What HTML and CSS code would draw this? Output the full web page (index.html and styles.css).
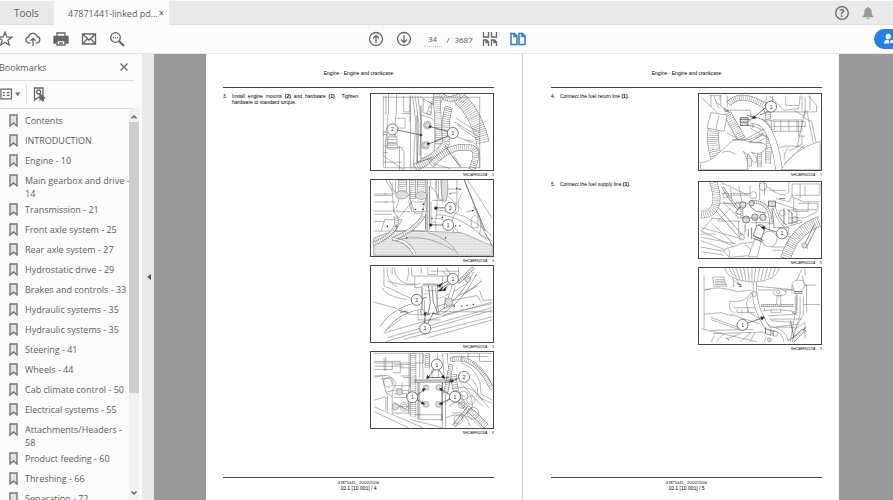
FILE: index.html
```
<!DOCTYPE html>
<html lang="en">
<head>
  <meta charset="UTF-8">
  <title>47871441-linked pdf</title>
  <link rel="stylesheet" href="styles.css">
  <script src="hoses.js" defer></script>
</head>
<body>
  <header class="tabs">
    <a class="tab tools" href="#">Tools</a>
    <div class="tab active"><span>47871441-linked pd...</span><button aria-label="Close tab">×</button></div>
    <div class="status">
      <button aria-label="Help"><svg viewBox="0 0 16 16"><circle cx="8" cy="8" r="6.3"/><text x="8" y="11.5" class="q">?</text></svg></button>
      <button aria-label="Notifications"><svg viewBox="0 0 16 16" class="bell"><path d="M8 2c.8 0 1 .5 1 1 2 .5 2.600 2 2.600 4 0 2.500.8 3.500 1.800 4.500v.8H2.600v-.8c1-1 1.800-2 1.800-4.500 0-2 .6-3.500 2.600-4 0-.5.2-1 1-1zM6.500 13h3c-.3 1.500-2.700 1.500-3 0z"/></svg></button>
    </div>
  </header>

  <nav class="toolbar">
    <div class="group left">
      <button aria-label="Star"><svg viewBox="0 0 16 16"><path d="M8 1.200l1.800 4.600 5 .3-3.900 3.100 1.300 4.800L8 11.300 3.800 14l1.300-4.800L1.200 6.100l5-.3z"/></svg></button>
      <button aria-label="Upload"><svg viewBox="0 0 16 16"><path d="M5.500 11.800H4A2.900 2.900 0 0 1 3.600 6 4.500 4.500 0 0 1 12.300 5.500 3.200 3.200 0 0 1 12 11.800h-1.500M8 15V7.500M5.500 9.800L8 7.300l2.500 2.500"/></svg></button>
      <button aria-label="Print"><svg viewBox="0 0 16 16"><path class="solid" d="M1 5.500h14V12h-2.500V9.500h-9V12H1z"/><path d="M4 5V2h8v3M4 9.500V14h8V9.500M6 12h4"/></svg></button>
      <button aria-label="Mail"><svg viewBox="0 0 16 16"><path d="M1.500 3h13v10h-13zM2 3.500L8 9l6-5.500M2 12.500l4.300-4.800M14 12.500L9.700 7.700"/></svg></button>
      <button aria-label="Search"><svg viewBox="0 0 16 16"><circle cx="6.500" cy="6.500" r="4.800"/><path d="M4 6.500h1M6 6.500h1M8 6.500h1"/><path class="thick" d="M10.200 10.200L15 15"/></svg></button>
    </div>
    <div class="group">
      <button aria-label="Previous page"><svg viewBox="0 0 16 16"><circle cx="8" cy="8" r="6.500"/><path d="M8 12V4.500M5 7.500l3-3 3 3"/></svg></button>
      <button aria-label="Next page"><svg viewBox="0 0 16 16"><circle cx="8" cy="8" r="6.500"/><path d="M8 4v7.500M5 8.500l3 3 3-3"/></svg></button>
      <label class="pager"><input type="text" value="34" aria-label="Page"><span>/</span><span>3687</span></label>
      <button aria-label="Scroll pages"><svg viewBox="0 0 16 16"><path d="M1.500 1v5h5V1M9.500 1v5h5V1M1.500 15V9h3l2 2v4M4 9v2.500h2.500M9.500 15V9h3l2 2v4M12 9v2.500h2.500"/></svg></button>
      <button aria-label="Two pages"><svg viewBox="0 0 16 16" class="blue"><path d="M1 2.500h3.500L7 5v8.500H1zM4 2.500v3h3M9 2.500h3.500L15 5v8.500H9zM12 2.500v3h3"/></svg></button>
    </div>
    <button class="share" aria-label="Share"><svg viewBox="0 0 16 16"><circle cx="6" cy="5" r="3"/><path d="M1 13c0-3 2-4.500 5-4.500L8 13z"/><circle cx="10" cy="11" r="2.500" class="plus"/></svg></button>
  </nav>

  <main class="workspace">
    <aside class="panel">
      <div class="panel-head"><h2>Bookmarks</h2><button aria-label="Close panel"><svg viewBox="0 0 10 10"><path d="M1.500 1.500l7 7M8.500 1.500l-7 7"/></svg></button></div>
      <div class="panel-tools">
        <button aria-label="Options"><svg viewBox="0 0 22 16"><path d="M1 3h11v10H1zM3 6.500h2M3 9.500h2M7 6.500h3M7 9.500h3"/><path class="solid" d="M17 7h3l-1.500 2z"/></svg></button>
        <button aria-label="Find bookmark"><svg viewBox="0 0 16 16"><path d="M3.500 2h8.500v12l-4-3-4.500 3z"/><circle cx="7.700" cy="6" r="2"/><path class="solid" d="M9 8l4.500 4-2 .3 1 2-1 .5-1-2L9 14z"/></svg></button>
      </div>
      <div class="list-wrap">
        <ul class="bookmarks">
          <li><a href="#">Contents</a></li>
          <li><a href="#">INTRODUCTION</a></li>
          <li><a href="#">Engine - 10</a></li>
          <li><a href="#">Main gearbox and drive - 14</a></li>
          <li><a href="#">Transmission - 21</a></li>
          <li><a href="#">Front axle system - 25</a></li>
          <li><a href="#">Rear axle system - 27</a></li>
          <li><a href="#">Hydrostatic drive - 29</a></li>
          <li><a href="#">Brakes and controls - 33</a></li>
          <li><a href="#">Hydraulic systems - 35</a></li>
          <li><a href="#">Hydraulic systems - 35</a></li>
          <li><a href="#">Steering - 41</a></li>
          <li><a href="#">Wheels - 44</a></li>
          <li><a href="#">Cab climate control - 50</a></li>
          <li><a href="#">Electrical systems - 55</a></li>
          <li><a href="#">Attachments/Headers - 58</a></li>
          <li><a href="#">Product feeding - 60</a></li>
          <li><a href="#">Threshing - 66</a></li>
          <li><a href="#">Separation - 72</a></li>
        </ul>
        <div class="scrollbar">
          <svg viewBox="0 0 10 10"><path d="M2.500 6.500L5 4l2.500 2.500"/></svg>
          <div class="track"><div class="thumb"></div></div>
          <svg viewBox="0 0 10 10"><path d="M2.500 3.500L5 6l2.500-2.500"/></svg>
        </div>
      </div>
    </aside>
    <button class="collapse" aria-label="Collapse panel"><svg viewBox="0 0 4 8"><path d="M4 1v6L0 4z"/></svg></button>

    <div class="viewer">
      <article class="page left-page">
        <h3>Engine - Engine and crankcase</h3>
        <section class="step">
          <span class="num">3.</span>
          <p>Install engine mounts <b>(2)</b> and hardware <b>(1)</b>.&nbsp; Tighten hardware to standard torque.</p>
          <div class="figures">
            <figure>
              <svg viewBox="32 25 372 234">
                <path d="M68 30V250M68 215L130 258M68 235H125M76 30V90M68 140H85M68 150H82M75 160V250M130 30V80H150V30M125 85H150M110 100H135V130H112M150 60V110M68 182L80 190H125L132 205V258M118 185V258M68 205H82"/>
                <path d="M152 30V256M158 30L168 110 160 256M166 30L178 120 172 256M174 30L185 110 180 215M182 30L196 50M68 150C75 130 80 150 80 185"/>
                <path class="heavy" d="M172 90V235M184 60V225"/>
                <path d="M184 90L215 98 228 110 225 210 180 225M192 40L218 55 215 90 190 82ZM225 30L205 75M230 30L212 70M255 30L240 65M208 50L230 60M305 30L290 60M312 30L330 90"/>
                <path class="hose" data-w="26" data-plain d="M96 20V60Q98 80 92 105V160"/>
                <rect x="82" y="155" width="28" height="22" rx="4"/><rect x="79" y="175" width="34" height="20" rx="8"/><path d="M82 165H110M80 182H112"/>
                <path class="hose" data-w="40" d="M285 25Q350 70 375 175"/>
                <path class="hose" data-w="22" d="M232 20Q235 80 240 180"/>
                <path class="hose" data-w="24" d="M270 65Q255 110 262 175Q245 210 165 252"/>
                <path class="hose" data-w="20" d="M340 258Q370 190 330 190Q270 180 215 245"/>
                <path class="hose" data-w="16" d="M250 30Q270 50 305 30"/>
                <path d="M285 110L365 158M292 100L365 145M295 120L365 170M280 150L340 175M320 165Q365 170 365 215V252M225 240L275 255M285 215L310 252M68 252H365V35H68"/>
                <path class="heavy" d="M258 185L305 250M170 238L220 220"/>
                <circle cx="204" cy="121" r="12"/><circle cx="204" cy="121" r="8" class="shade"/><circle cx="198" cy="183" r="12"/><circle cx="198" cy="183" r="8" class="shade"/><circle cx="208" cy="83" r="6"/><circle cx="212" cy="229" r="5" class="shade"/>
                <g class="lead"><path d="M112 136L186 152M266 140L210 125M268 154L205 180"/><circle cx="96" cy="134" r="17"/><circle cx="282" cy="145" r="17"/><circle cx="184" cy="151" r="3" class="dot"/><circle cx="212" cy="126" r="3" class="dot"/><circle cx="207" cy="178" r="3" class="dot"/></g>
                <text x="96" y="140">2</text><text x="282" y="151">1</text>
              </svg>
              <figcaption><span>NH12AFRS0128A</span><span>3</span></figcaption>
            </figure>
            <figure>
              <svg viewBox="32 282 372 235">
                <defs><pattern id="mesh" width="8" height="8" patternUnits="userSpaceOnUse"><path d="M0 4L4 0 8 4 4 8Z"/></pattern></defs>
                <path class="mesh" d="M38 462Q100 430 185 440L310 445 404 485V515H38Z"/>
                <path d="M38 325H100M38 330H95M38 350H105M38 378H112M38 388H95M38 410H72M95 290V315M75 282L95 315 100 380M85 282L105 325M200 440H38M60 440L72 405H125L105 440M72 350H80M70 325H78"/>
                <path d="M115 325Q120 355 98 378L115 400 160 345M105 285V320L150 330 155 380H200V325M110 380H150"/>
                <path class="hose" data-w="12" d="M36 480Q125 440 105 393"/>
                <path class="hose" data-w="12" d="M95 466Q170 435 193 390"/>
                <path class="hose" data-w="10" data-plain d="M100 465Q145 470 165 514"/>
                <path class="hose" data-w="26" d="M127 282V322"/><path class="hose" data-w="20" d="M158 282V340"/><path class="hose" data-w="26" d="M185 282V324"/>
                <ellipse cx="125" cy="328" rx="20" ry="12" class="shade"/><ellipse cx="185" cy="330" rx="18" ry="12" class="shade"/><path d="M150 310V340L165 385H188L198 340M160 350H195M145 345L152 372"/>
                <path class="heavy" d="M203 282V440M210 300V436M198 385V436"/>
                <path d="M214 282V300L234 325V355L230 410M215 350V412M230 282V310M238 282V340M245 282L250 350M220 345H265M215 412H230V438"/>
                <ellipse cx="247" cy="305" rx="17" ry="40"/><ellipse cx="257" cy="305" rx="10" ry="45" class="shade"/>
                <path d="M265 310H310M275 322H295M267 330L310 375M318 282L380 445M328 282L404 400M295 282V355L275 360M312 320Q295 345 300 375Q270 400 285 445M345 365Q380 395 365 450L404 470M233 375Q320 375 404 455M230 390Q300 385 390 470M225 400Q270 400 300 445M325 380L350 375M338 405Q350 380 360 400V430H342Z"/>
                <path class="heavy" d="M318 282L383 440M382 445L404 485"/>
                <path d="M105 470Q190 440 285 500M205 445Q270 460 300 514"/>
                <g class="marks"><path d="M189 357h5M188 373h5M292 308h4M272 324h4M302 310h4M289 424h4M302 424h4M342 377h4M216 401h4M248 398h4M78 425h4M105 425h4M138 460h4M258 461h4M165 373h4"/></g>
                <g class="lead"><path d="M258 368H230M252 421H216"/><circle cx="275" cy="368" r="17"/><circle cx="268" cy="421" r="17"/><circle cx="230" cy="369" r="4" class="dot"/><circle cx="214" cy="421" r="4" class="dot"/></g>
                <text x="275" y="374">2</text><text x="268" y="427">1</text>
              </svg>
              <figcaption><span>NH12AFRS0130A</span><span>4</span></figcaption>
            </figure>
            <figure>
              <svg viewBox="32 14 372 234">
                <path d="M38 125L110 145M70 18V75M80 18Q75 60 110 78M70 75L150 112M95 18V40M100 18Q110 75 165 70M145 18Q150 40 140 60M155 18V45H300V18M165 45V80H250V45M185 18V35M205 18V40H235V18M215 30H300M70 205L120 160 185 165M72 215L125 175M75 200L190 120"/>
                <path d="M65 80Q70 105 140 118M80 60Q130 80 185 68M250 30L275 50M260 18L290 65"/>
                <path class="hose" data-w="24" data-plain d="M68 205Q110 145 190 135Q270 130 365 50"/>
                <path class="hose" data-w="10" d="M300 65Q320 45 345 18"/>
                <path class="hose" data-w="12" data-plain d="M240 160Q310 120 350 35"/>
                <path class="hose" data-w="12" data-plain d="M268 130L285 75"/>
                <path d="M75 247L404 150M80 235L404 142M70 220L404 125M130 240L404 170M205 235L404 180M250 166Q300 150 404 130M240 155H404M300 105L360 75M365 90L375 120L404 118M280 120L355 105 370 125M260 110L285 135 255 145Z"/>
                <path class="white" d="M185 75H235L232 160H205L190 152Z"/>
                <path class="heavy" d="M207 75L213 125 205 165M218 78L222 125 236 160M190 70H236M183 150L185 164H212M218 160L240 163M115 150L145 158M120 157L142 153"/>
                <path d="M190 80L185 150M195 120V165M228 80L240 165M197 90H229M195 100H204M175 150V180H245"/>
                <circle cx="270" cy="125" r="12" class="shade"/><circle cx="328" cy="55" r="9" class="shade"/><path class="marks" d="M285 138h4M308 137h4M324 135h4M343 132h4"/>
                <g class="lead"><path d="M188 115L201 110M268 68L246 84M272 69L256 86M268 60L238 75M195 190L197 160M205 190L224 155"/><circle cx="171" cy="118" r="17"/><circle cx="282" cy="54" r="17"/><circle cx="197" cy="206" r="17"/><path class="arrow" d="M234 75l14-7-4 10zM236 91l14-11-3 11zM249 90l12-11-2 11zM193 158h8l-4 9z"/></g>
                <text x="171" y="124">2</text><text x="282" y="60">1</text><text x="197" y="212">1</text>
              </svg>
              <figcaption><span>NH12AFRS0132A</span><span>5</span></figcaption>
            </figure>
            <figure>
              <svg viewBox="32 271 372 235">
                <path d="M38 275H190V305H38M38 300H95V325H38M40 315H130M38 345H65L75 395 95 410M95 300H120V335H98M100 310H150M70 330V290M75 285V330M120 320H150V345H120M38 350Q90 330 105 365Q105 395 75 395M60 355Q95 345 95 370M38 440L190 505M38 455L145 505M38 420L75 410V450M95 390H145V460H95ZM80 400V455M100 400H140V412H100M98 425L140 450M105 440H145M95 375H160M128 350H150V380M105 385H125V365"/>
                <circle cx="83" cy="365" r="15"/><circle cx="105" cy="440" r="10" class="shade"/><circle cx="133" cy="440" r="14"/><circle cx="133" cy="440" r="8"/><circle cx="118" cy="395" r="9" class="shade"/>
                <path class="hose" data-w="18" d="M160 275V470"/>
                <path d="M147 275V465M180 275V350M190 275V355M210 275V325M235 275V300M180 365V480H250V365M150 480L250 505M165 465H250V505M260 365V505M218 325V350H238V325Z"/>
                <path class="hose" data-w="14" d="M203 275V320"/>
                <path class="hose" data-w="16" data-plain d="M263 350L258 275"/><path class="hose" data-w="14" d="M277 310L260 400"/>
                <path class="heavy" d="M163 358H275M163 364H275M200 350H270M175 365V480M250 365L248 485M275 355L285 385"/>
                <path class="hose" data-w="14" d="M275 295Q340 280 385 350L404 385"/>
                <path class="hose" data-w="18" d="M285 340Q285 420 345 460L385 500"/>
                <path class="hose" data-w="12" d="M335 440L285 500"/>
                <path d="M270 275H404M280 285H390M310 280V300M330 275V295M310 305Q370 325 370 400L404 420M340 300Q400 350 404 375M300 360L375 440M310 345L395 445M365 275V300H404M280 385Q340 365 375 420M260 430Q285 385 320 410M270 440Q295 410 325 445M280 460Q325 450 335 500M260 475Q320 445 370 505M325 395Q350 410 340 450M360 410L404 430M340 355Q370 385 355 410"/>
                <circle cx="315" cy="405" r="13"/><circle cx="338" cy="420" r="13"/><circle cx="345" cy="460" r="18"/><circle cx="310" cy="435" r="10"/><circle cx="300" cy="480" r="14"/>
                <circle cx="200" cy="381" r="8" class="shade"/><circle cx="239" cy="381" r="9" class="shade"/><circle cx="200" cy="433" r="9" class="shade"/><circle cx="238" cy="433" r="9" class="shade"/>
                <g class="lead"><path d="M226 325L205 350M239 325L255 350M300 353L275 362M172 405L196 385M172 418L192 431M274 403L242 384M275 416L241 431"/><circle cx="233" cy="310" r="17"/><circle cx="317" cy="348" r="17"/><circle cx="157" cy="411" r="17"/><circle cx="289" cy="409" r="17"/><path class="arrow" d="M202 354l2-11 7 6zM257 354l-10-6 7-5zM272 363l10-7 2 7zM197 384l-10 2 5 7zM195 433l-10-2 4-7zM241 384l10 1-4 7zM240 432l9-6 2 7z"/></g>
                <text x="233" y="316">1</text><text x="317" y="354">2</text><text x="157" y="417">1</text><text x="289" y="415">1</text>
              </svg>
              <figcaption><span>NH12AFRS0134A</span><span>6</span></figcaption>
            </figure>
          </div>
        </section>
        <footer>47871441_ 15/02/2016<strong>10.1 [10.001] / 4</strong></footer>
      </article>

      <article class="page right-page">
        <h3>Engine - Engine and crankcase</h3>
        <section class="step">
          <span class="num">4.</span>
          <p>Connect the fuel return line <b>(1)</b>.</p>
          <div class="figures">
            <figure>
              <svg viewBox="25 25 372 234">
                <path d="M30 35L85 88M60 30V65M68 30L85 70M90 28V60M110 30V65M75 50L105 70M55 30H90L85 40M230 30V60M240 30L285 75 330 70 335 30M250 30V50M290 30V60H330M240 80H385V60L360 30M340 30V75M350 35V90M315 75L350 95M365 30V75"/>
                <path class="hose" data-w="36" d="M70 120Q60 175 78 225"/>
                <path class="hose" data-w="18" d="M115 55Q150 15 225 60Q245 80 235 240"/>
                <path class="hose" data-w="26" d="M110 85L155 165"/>
                <path class="white" d="M60 82L110 90 100 140 48 130Z"/><path d="M85 90L75 135M105 75H180L185 95"/>
                <path d="M175 105L240 105 255 110V135H215L185 120M250 105H340V140H250M275 105V140M300 105V140M325 105V140M340 95L370 110 385 180M355 75L375 175M255 110H350V125H250M190 95V130M340 150V180L300 200M270 190Q300 180 350 190M285 240L350 180M350 75L325 190M330 110V155H350M235 160L180 130M110 145L155 170 220 135M125 165H180L220 145M180 170L235 195"/>
                <path class="hose" data-w="14" d="M178 205V248"/><path class="hose" data-w="14" d="M210 180V250"/>
                <path class="hose" data-w="22" data-plain d="M180 106Q215 103 235 135Q260 180 270 260"/>
                <path class="white" d="M28 236Q55 235 75 215L125 170Q145 162 180 172Q240 175 230 190Q220 215 185 205Q205 215 200 235Q190 240 180 215L160 202Q175 225 173 258H28Z"/>
                <path d="M95 205Q110 195 135 210M180 172L225 145M195 165Q230 140 230 160L200 175M175 175H220"/>
                <path class="white" d="M275 258Q315 195 396 170V258Z"/><path d="M300 190Q285 200 285 230"/>
                <g class="heavy"><rect x="150" y="98" width="24" height="24" class="shade"/><path d="M148 103H178M150 112H175M170 90L190 95 180 107M100 70L115 78 105 80ZM170 120L190 125"/></g>
                <g class="lead"><path d="M228 67L190 99M238 78L210 90"/><circle cx="245" cy="64" r="17"/><path class="arrow" d="M188 101l5-9 6 7z"/></g><text x="245" y="70">1</text>
              </svg>
              <figcaption><span>NH12AFRS0120A</span><span>7</span></figcaption>
            </figure>
          </div>
        </section>
        <section class="step second">
          <span class="num">5.</span>
          <p>Connect the fuel supply line <b>(1)</b>.</p>
          <div class="figures">
            <figure>
              <svg viewBox="25 289 372 235">
                <path d="M28 440L175 510M30 430L155 465M28 460L135 480M28 470L160 520M65 400L30 440M28 490L110 505M30 505L100 515M60 415L130 480M28 450H75M90 290L175 330M90 325H180V300M120 308L125 355 155 350 145 300M120 330H175M95 350L150 370M100 355L145 400M85 355H185M210 290V345M225 290V330M230 300Q280 345 300 320V290M240 315H290M260 340L300 350 310 330M255 350L330 375M300 400H350L390 380M310 295H396V330H310ZM335 295V340M350 300V330M310 335L345 350H396M315 340V380H360V350M330 355H390V375H330"/>
                <path class="hose" data-w="24" d="M65 285Q100 385 30 390"/>
                <path class="hose" data-w="8" d="M95 305Q110 330 145 375"/>
                <path class="hose" data-w="14" data-plain d="M80 375L150 455"/>
                <path class="hose" data-w="10" d="M180 350Q245 345 245 420"/><path class="hose" data-w="8" d="M155 355V400"/>
                <path class="hose" data-w="9" data-plain d="M250 350Q265 410 290 425L340 410"/>
                <path class="hose" data-w="32" d="M290 525Q315 440 396 410"/>
                <g class="heavy"><circle cx="158" cy="360" r="10" class="shade"/><circle cx="168" cy="405" r="11" class="shade"/><circle cx="195" cy="398" r="10" class="shade"/><circle cx="220" cy="398" r="10" class="shade"/><circle cx="185" cy="355" r="8" class="shade"/><rect x="237" y="348" width="22" height="16" class="shade"/><path d="M150 365L135 385L150 390M180 365L200 380 230 385M165 420V445M185 430V465M175 435V460M270 340H290M285 370V420M295 375L310 385V420M248 370L255 430M380 420L347 485M385 430L355 490M340 480L360 495"/></g>
                <circle cx="240" cy="465" r="24"/><circle cx="220" cy="303" r="12"/><circle cx="190" cy="330" r="11"/><circle cx="280" cy="385" r="9"/><circle cx="320" cy="405" r="9"/><circle cx="105" cy="330" r="8"/><circle cx="155" cy="460" r="8"/><circle cx="348" cy="485" r="8" class="shade"/>
                <path d="M140 400H200V445M145 410V450H165M185 415H240V440M250 430H300V455M265 440L315 465M245 490H285M250 500H280M300 375H325V415H300ZM120 370L80 410H150M60 400L100 405"/>
                <path class="white" d="M105 495Q130 490 150 480L190 475Q205 485 200 515L115 522 100 505Z"/><path d="M165 485Q185 490 188 515M110 495Q120 500 115 520"/>
                <path class="white heavy" d="M200 425Q220 415 227 430L215 465 190 455Z"/><path class="white" d="M195 465L215 470 203 520H175Z"/><path class="heavy" d="M190 455L222 470M188 462L218 475M205 420L215 428"/>
                <g class="lead"><path d="M263 444L220 430"/><circle cx="279" cy="448" r="17"/><path class="arrow" d="M214 428l12-1-3 9z"/></g><text x="279" y="454">1</text>
              </svg>
              <figcaption><span>NH12AFRS0122A</span><span>8</span></figcaption>
            </figure>
            <figure>
              <svg viewBox="25 22 372 235">
                <path d="M38 45V90M38 90Q80 75 140 95L185 90M65 50H100V55L108 78H68ZM72 58H100M72 63H102M72 68H103M72 73H105M110 28Q130 40 130 80M120 30L150 75M130 60L155 80M200 78L320 90M205 90H310M310 75L310 100M340 75H385M345 135H396M350 22V45M325 60L340 25M330 75H355V160M320 110V160L305 250M335 110V165L310 250M345 110V165L320 210M340 45L350 75M38 210V95Q45 85 60 90"/>
                <path d="M185 95Q170 130 120 125Q110 150 130 160M185 110Q160 120 175 160M130 145H200M140 150V160H195M155 150V160M175 150V160M60 175L155 210M60 182L145 212M120 165L210 195M180 160L250 205M240 180H340M235 170L320 165M220 155Q270 145 330 160M245 185L315 190M240 205H320M60 215L190 212M65 225L230 220M30 210L200 250M70 230L60 250M100 225L75 250M110 240L150 225M150 250L185 220M195 222L180 250M225 250L230 235M38 165L90 160L125 170"/>
                <path d="M250 205Q290 210 300 250M240 215Q280 215 285 250M260 205L330 195M315 215L350 190V240"/>
                <path class="white" d="M102 20Q105 58 185 66Q265 62 270 20Z"/><path d="M115 22L128 46M125 22L138 52M137 22L148 57M149 22L158 60M161 22L168 63M173 22L178 64M186 22V65M198 22L193 65M210 22L203 64M222 22L213 61M234 22L225 57M246 22L237 52M258 22L250 45"/>
                <path class="hose" data-w="12" data-plain d="M195 65V105"/><path class="hose" data-w="16" data-plain d="M195 100Q195 145 235 210"/>
                <circle cx="193" cy="102" r="8"/><path class="hose" data-w="8" d="M215 138H315"/>
                <path class="white" d="M250 97Q260 82 275 88L292 95Q292 107 276 107Q255 110 250 97ZM264 108L262 135 275 137V108Z"/><circle cx="267" cy="96" r="5"/><path d="M245 150V160H275V150M225 145V155"/>
                <path class="white" d="M310 70L320 60H342L350 75L340 95H318Z"/><path class="heavy" d="M315 95H342M315 101H342M325 105V155M310 160L325 165M305 185L318 250M300 245L355 205M345 210L355 220M228 205V225L245 230V210M252 215V232M228 210L245 215M140 70L155 75M145 78L155 80M105 238L115 244"/>
                <path class="hose" data-w="12" d="M345 215L315 245"/><circle cx="240" cy="244" r="6" class="shade"/><circle cx="258" cy="225" r="8"/>
                <g class="lead"><path d="M173 192L220 176"/><circle cx="157" cy="198" r="17"/><path class="arrow" d="M224 174l-11-1 4 10z"/></g><text x="157" y="204">1</text>
              </svg>
              <figcaption><span>NH12AFRS0123A</span><span>9</span></figcaption>
            </figure>
          </div>
        </section>
        <footer>47871441_ 15/02/2016<strong>10.1 [10.001] / 5</strong></footer>
      </article>
    </div>
  </main>
</body>
</html>
```
FILE: styles.css
```
* {
  box-sizing: border-box;
}
body {
  margin: 0;
  height: 100vh;
  display: flex;
  flex-direction: column;
  overflow: hidden;
  font-family: "Open Sans", "Noto Sans", sans-serif;
  font-size: 9px;
  color: #5c5c5c;
  background: #fbfbfb;
}
h2, h3, p, ul, figure {
  margin: 0;
  padding: 0;
  font-weight: normal;
}
a {
  color: inherit;
  text-decoration: none;
}
button {
  display: flex;
  align-items: center;
  justify-content: center;
  padding: 0;
  border: none;
  background: none;
  color: inherit;
  font: inherit;
}
button svg {
  width: 16px;
  height: 16px;
  fill: none;
  stroke: #666;
  stroke-width: 1.3;
}
svg .solid {
  fill: #666;
}
svg .thick {
  stroke-width: 2;
}
svg .q {
  font-size: 10px;
  font-weight: bold;
  text-anchor: middle;
  fill: #666;
  stroke: none;
}
button .bell {
  fill: #999;
  stroke: none;
}
button .blue {
  stroke: #2a7cc7;
  stroke-width: 1.5;
}

/* top bars */
.tabs {
  display: flex;
  flex: none;
  height: 25px;
  background: #e9e9e9;
  border-top: 1px solid #f8f8f8;
  border-bottom: 1px solid #dedede;
}
.tab {
  display: flex;
  align-items: center;
  white-space: nowrap;
}
.tools {
  width: 54px;
  padding-left: 14px;
  font-size: 10px;
}
.active {
  height: 24px;
  width: 115px;
  padding: 0 4px 0 14px;
  justify-content: space-between;
  background: #fbfbfb;
}
.active button {
  font-size: 10px;
  width: 8px;
}
.status {
  display: flex;
  gap: 10px;
  margin-left: auto;
  padding-right: 17px;
}
.toolbar {
  display: grid;
  grid-template-columns: 1fr auto 1fr;
  align-items: center;
  flex: none;
  height: 29px;
  border-bottom: 1px solid #e4e4e4;
}
.group {
  display: flex;
}
.group button {
  width: 28px;
}
.left {
  margin-left: -9px;
}
.pager {
  display: flex;
  align-items: center;
  gap: 5px;
  width: 58px;
  padding-left: 6px;
  font-size: 8px;
}
.pager input {
  width: 18px;
  height: 16px;
  padding: 0;
  border: none;
  border-bottom: 1px dotted #bbb;
  background: none;
  font: inherit;
  color: inherit;
  text-align: center;
}
.share {
  justify-self: end;
  justify-content: flex-start;
  width: 19px;
  height: 20px;
  padding-left: 9px;
  border-radius: 10px 0 0 10px;
  background: #2680eb;
  overflow: hidden;
}
.share svg {
  flex: none;
  width: 14px;
  fill: #fff;
  stroke: none;
}
.share .plus {
  stroke: #2680eb;
}

/* bookmarks */
.workspace {
  display: flex;
  flex: 1;
  min-height: 0;
}
.panel {
  display: flex;
  flex-direction: column;
  flex: none;
  width: 142px;
  padding-right: 3px;
}
.panel-head {
  display: flex;
  flex: none;
  align-items: center;
  justify-content: space-between;
  height: 27px;
  margin-right: 5px;
  padding-right: 5px;
  border-bottom: 1px solid #ddd;
}
.panel-head h2 {
  margin-left: -1px;
  font-size: 9px;
}
.panel-head svg {
  width: 10px;
  height: 10px;
}
.panel-tools {
  display: flex;
  flex: none;
  align-items: center;
  height: 28px;
  margin-right: 5px;
  padding-bottom: 2px;
  border-bottom: 1px solid #ddd;
}
.panel-tools button {
  height: 20px;
}
.panel-tools button:first-child {
  width: 27px;
  padding-right: 5px;
  border-right: 1px solid #ddd;
}
.panel-tools button:first-child svg {
  width: 22px;
}
.panel-tools button:last-child {
  width: 23px;
}
.list-wrap {
  display: flex;
  flex: 1;
  min-height: 0;
}
.bookmarks {
  flex: 1;
  padding: 5px 0 0 9px;
  list-style: none;
  overflow: hidden;
}
.bookmarks li {
  display: flex;
  min-height: 20px;
  padding-bottom: 3px;
  line-height: 13px;
}
.bookmarks li::before {
  content: "";
  flex: none;
  width: 9px;
  height: 13px;
  margin-right: 7px;
  background: url("data:image/svg+xml,%3Csvg xmlns='http://www.w3.org/2000/svg' viewBox='0 0 9 13'%3E%3Cpath d='M1 1h7v11L4.500 9 1 12z' fill='%23e2e2e2' stroke='%23757575' stroke-width='1.400'/%3E%3C/svg%3E") no-repeat;
}
.bookmarks a {
  margin-right: -4px;
}
.scrollbar {
  display: flex;
  flex-direction: column;
  width: 10px;
  padding: 3px 0 2px;
  background: #f1f1f1;
}
.scrollbar svg {
  height: 10px;
  fill: none;
  stroke: #666;
  stroke-width: 1.5;
}
.track {
  flex: 1;
}
.thumb {
  height: 74%;
  background: #cdcdcd;
}
.collapse {
  flex: none;
  width: 12px;
  padding-left: 2px;
  background: #e9e9e9;
}
.collapse svg {
  width: 4px;
  height: 8px;
  fill: #555;
  stroke: none;
}

/* document */
.viewer {
  display: flex;
  flex: 1;
  padding: 0 54px 0 52px;
  background: #999;
}
.page {
  display: flex;
  flex-direction: column;
  flex: 1;
  background: #fff;
  font-family: "Liberation Sans", Arial, sans-serif;
  font-size: 5px;
  line-height: 6px;
  color: #000;
}
.left-page {
  padding: 16px 28px 9px 17px;
  border-right: 1px solid #ccc;
}
.right-page {
  padding: 16px 17px 9px 28px;
}
.page h3 {
  height: 18px;
  font-size: 5px;
  text-align: center;
  border-bottom: 1px solid #444;
}
.step {
  display: grid;
  grid-template-columns: 9px 1fr 124px;
  padding-top: 5px;
}
.step p {
  padding-right: 12px;
  text-align: justify;
}
.second {
  padding-top: 2px;
}
.figures svg {
  display: block;
  width: 100%;
  height: 78px;
  border: 1px solid #444;
  fill: none;
  stroke: #777;
  stroke-width: 1.7;
}
.figures figcaption {
  display: flex;
  justify-content: flex-end;
  gap: 5px;
  height: 8px;
  font-size: 3px;
  line-height: 8px;
}
.figures text {
  font-size: 15px;
  text-anchor: middle;
  fill: #222;
  stroke: none;
}
.figures .white {
  fill: #fff;
}
.figures .shade {
  fill: #ddd;
}
.figures .heavy {
  stroke: #444;
  stroke-width: 2;
}
.figures .marks {
  stroke: #333;
  stroke-width: 4;
}
.figures .lead {
  stroke: #333;
  stroke-width: 2;
}
.lead circle {
  fill: #fff;
}
.lead .dot, .lead .arrow {
  fill: #222;
}
.figures .mesh {
  fill: url(#mesh);
}
#mesh path {
  stroke-width: 1;
}
.page footer {
  margin-top: auto;
  padding-top: 2px;
  border-top: 1px solid #444;
  text-align: center;
  font-size: 4px;
  line-height: 5px;
}
footer strong {
  display: block;
  font-size: 5px;
  line-height: 6px;
  font-weight: normal;
}
```
FILE: hoses.js
```
// a hose is one path drawn three times: outline, white body, ribs
document.querySelectorAll(".hose").forEach(function (hose) {
  const width = Number(hose.dataset.w);
  const body = hose.cloneNode();
  hose.style.strokeWidth = width;
  body.style.strokeWidth = width - 3;
  body.style.stroke = "#fff";
  hose.after(body);

  if (!("plain" in hose.dataset)) {
    const ribs = hose.cloneNode();
    ribs.style.strokeWidth = width - 2;
    ribs.style.strokeDasharray = "1.3 5";
    body.after(ribs);
  }
});
```
